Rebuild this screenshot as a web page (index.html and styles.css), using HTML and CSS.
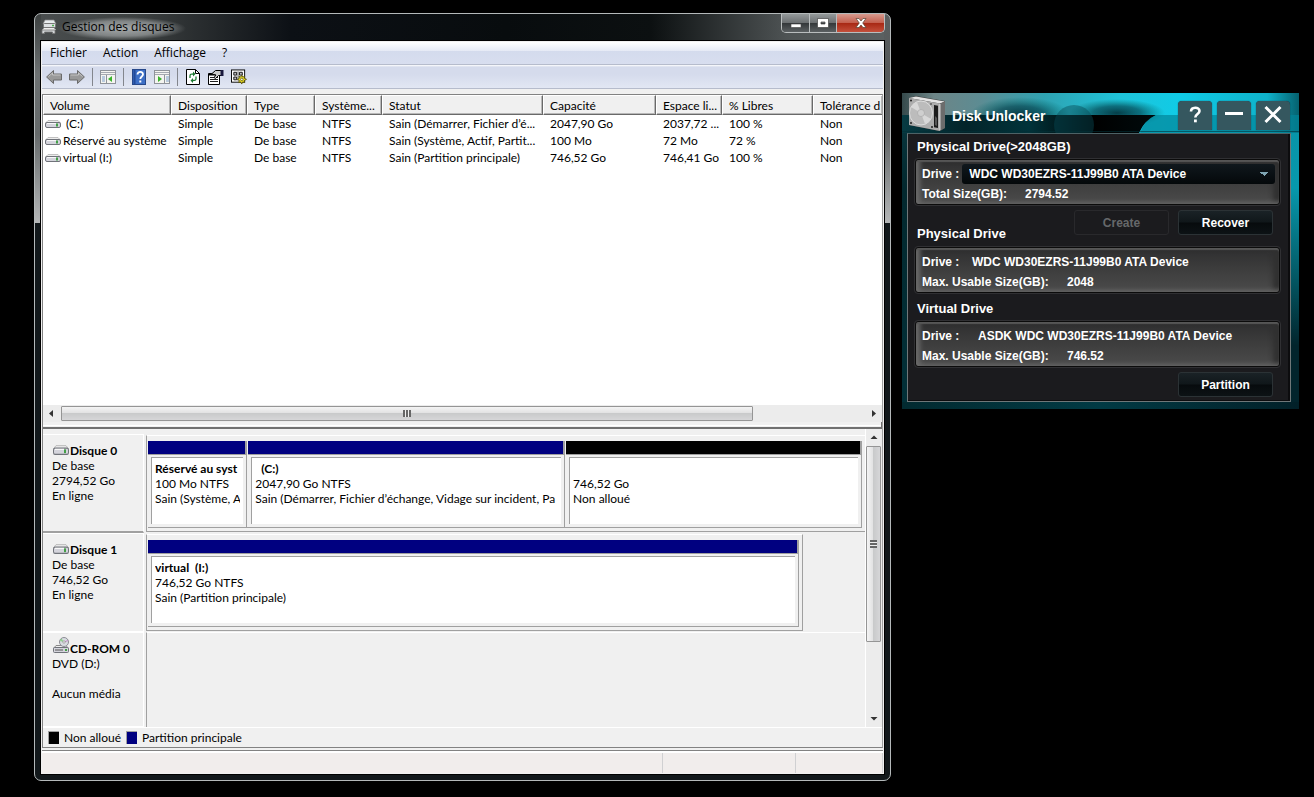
FILE: index.html
```html
<!DOCTYPE html>
<html lang="fr">
<head>
<meta charset="utf-8">
<title>Gestion des disques</title>
<link rel="stylesheet" href="styles.css">
</head>
<body>
<svg class="defs" width="0" height="0" aria-hidden="true">
  <defs>
    <symbol id="drive" viewBox="0 0 16 8">
      <path d="M3 .5h10l2.500 2.500h-15z" fill="#ececec" stroke="#b5b5b5" stroke-width=".8"/>
      <rect x=".5" y="2.500" width="15" height="5" rx="1.500" fill="#d4d4dc" stroke="#70737a"/>
      <path d="M2 3.500h9" stroke="#f8f8f8"/>
      <rect x="11" y="3.500" width="2" height="3" fill="#42a047"/>
    </symbol>
  </defs>
</svg>
<main class="desktop">
  <section class="win">
    <header class="titlebar">
      <svg class="app-icon" viewBox="0 0 16 16" width="16" height="16" aria-hidden="true">
        <path d="M4 1h9l2 4H2z" fill="#e8ecee" stroke="#888" stroke-width=".7"/>
        <rect x="2.500" y="4.500" width="12" height="4" rx="1" fill="#dde1e3" stroke="#777"/>
        <path d="M11 6.500h2" stroke="#4fae50" stroke-width="1.500"/>
        <path d="M3 9h10l2 2H1z" fill="#eee"/>
        <path d="M1 11h13v3.500h-2.500V13h-8v1.500H1z" fill="#d2d6d8" stroke="#777" stroke-width=".8"/>
      </svg>
      <h1 class="title">Gestion des disques</h1>
      <div class="caption-buttons">
        <button class="cap cap-min" aria-label="Réduire"><svg viewBox="0 0 12 12" width="12" height="12"><rect x="1" y="7" width="10" height="3.500" fill="#fff" stroke="#444" stroke-width=".6"/></svg></button>
        <button class="cap cap-max" aria-label="Agrandir"><svg viewBox="0 0 12 12" width="12" height="12"><path fill-rule="evenodd" d="M.5 1.500h11v9H.5zM4 5h4v2H4z" fill="#fff" stroke="#444" stroke-width=".7"/></svg></button>
        <button class="cap cap-close" aria-label="Fermer"><svg viewBox="0 0 12 12" width="12" height="12"><path d="M1 1.500h3l2 2.500 2-2.500h3L7.700 6l3.300 4.500H8L6 8l-2 2.500H1L4.300 6z" fill="#fff" stroke="#543" stroke-width=".7"/></svg></button>
      </div>
    </header>
    <div class="client">
      <nav class="menubar">
        <button class="menu">Fichier</button><button class="menu">Action</button><button class="menu">Affichage</button><button class="menu">?</button>
      </nav>
      <div class="toolbar">
        <button class="tool" aria-label="Précédent"><svg viewBox="0 0 16 16" width="16" height="16"><path d="M.6 8L7.500 1.500V5h8v6h-8v3.500z" fill="#999" stroke="#6b6b6b"/><path d="M2.500 7.500L6.500 4v2h8" fill="none" stroke="#c4c4c4"/></svg></button>
        <button class="tool" aria-label="Suivant"><svg viewBox="0 0 16 16" width="16" height="16"><path d="M15.400 8L8.500 1.500V5h-8v6h8v3.500z" fill="#999" stroke="#6b6b6b"/><path d="M1.500 6h8V4l4 3.500" fill="none" stroke="#c4c4c4"/></svg></button>
        <span class="sep"></span>
        <button class="tool" aria-label="Arborescence"><svg viewBox="0 0 16 14" width="16" height="14"><rect x=".5" y=".5" width="15" height="13" fill="#f4f4f0" stroke="#8e9299"/><path d="M1 2.500h14M1 4.500h14" stroke="#a5a9b0"/><path d="M6.500 5v8" stroke="#8e9299"/><path d="M2 7h3M2 9h3M2 11h3" stroke="#7da0cc"/><path d="M12 6v6L8 9z" fill="#3bb32d"/></svg></button>
        <span class="sep"></span>
        <button class="tool" aria-label="Aide"><svg viewBox="0 0 14 16" width="14" height="16"><rect x=".5" y=".5" width="13" height="15" fill="#3d6fc6" stroke="#27488a"/><path d="M2.500 1v14" stroke="#234a98" stroke-width="2"/><path d="M5.500 5.500c0-3.500 5.500-3.500 5.500 0 0 2-2.700 2-2.700 4.500" fill="none" stroke="#fff" stroke-width="1.800"/><rect x="7.300" y="11.500" width="2" height="2" fill="#fff"/></svg></button>
        <button class="tool" aria-label="Volet"><svg viewBox="0 0 16 14" width="16" height="14"><rect x=".5" y=".5" width="15" height="13" fill="#f4f4f0" stroke="#8e9299"/><path d="M1 2.500h14M1 4.500h14" stroke="#a5a9b0"/><path d="M10.500 5v8" stroke="#8e9299"/><path d="M12 7h3M12 9h3M12 11h3" stroke="#7da0cc"/><path d="M4 6v6l4-3z" fill="#3bb32d"/></svg></button>
        <span class="sep"></span>
        <button class="tool" aria-label="Actualiser"><svg viewBox="0 0 14 16" width="14" height="16"><path d="M.5.5h9l4 4v11H.5z" fill="#fff" stroke="#000"/><path d="M9.500.500v4h4" fill="none" stroke="#000"/><path d="M4 9V7c0-2 1-2 3.500-2M10 7.500v2c0 2-1 2-3.500 2" fill="none" stroke="#1d7a33" stroke-width="1.300"/><path d="M7 2.500v5L9.500 5zM7 9v5l-2.500-2.500z" fill="#1d7a33"/></svg></button>
        <button class="tool" aria-label="Propriétés"><svg viewBox="0 0 16 16" width="16" height="16"><path d="M.5 4.500h11v11H.5z" fill="#fff" stroke="#000"/><path d="M1 5.500h9" stroke="#000" stroke-width="2"/><path d="M2 8.500h8M2 10.500h8M2 12.500h8" stroke="#222"/><path d="M3.500 5l4-3.500h6v5h-3l-3 3-1.500-1L8 6z" fill="#ccc" stroke="#000"/><path d="M14 1v6" stroke="#18183c" stroke-width="3"/></svg></button>
        <button class="tool" aria-label="Paramètres"><svg viewBox="0 0 17 16" width="16" height="16"><rect x=".5" y=".5" width="14" height="13" fill="#fff" stroke="#000"/><path d="M3 3h3v3H3zM9 3h3v3H9zM3 8h3v3H3z" fill="#bbb" stroke="#111"/><path d="M7.500 2v10" stroke="#555"/><path d="M11.500 6l1 2 2-.8-.4 2 2.400 1.300-2.400 1.300.4 2-2.100-.6-1 2.300-1-2.300-2.200.7.600-2.300L6.700 10.500 9 9.300l-.6-2 2.100.7z" fill="#e9dc28" stroke="#4b4600" stroke-width=".8"/><circle cx="11.500" cy="10.500" r="1.300" fill="#fff" stroke="#4b4600" stroke-width=".7"/></svg></button>
      </div>
      <div class="panes">
        <div class="listview">
          <table class="volumes">
            <colgroup><col class="c1"><col class="c2"><col class="c3"><col class="c4"><col class="c5"><col class="c6"><col class="c7"><col class="c8"><col class="c9"></colgroup>
            <thead><tr><th>Volume</th><th>Disposition</th><th>Type</th><th>Système...</th><th>Statut</th><th>Capacité</th><th>Espace li...</th><th>% Libres</th><th>Tolérance d</th></tr></thead>
            <tbody>
              <tr><td><svg class="drv" width="16" height="8"><use href="#drive"/></svg>&nbsp;(C:)</td><td>Simple</td><td>De base</td><td>NTFS</td><td>Sain (Démarrer, Fichier d’é...</td><td>2047,90 Go</td><td>2037,72 ...</td><td>100 %</td><td>Non</td></tr>
              <tr><td><svg class="drv" width="16" height="8"><use href="#drive"/></svg>Réservé au système</td><td>Simple</td><td>De base</td><td>NTFS</td><td>Sain (Système, Actif, Partit...</td><td>100 Mo</td><td>72 Mo</td><td>72 %</td><td>Non</td></tr>
              <tr><td><svg class="drv" width="16" height="8"><use href="#drive"/></svg>virtual (I:)</td><td>Simple</td><td>De base</td><td>NTFS</td><td>Sain (Partition principale)</td><td>746,52 Go</td><td>746,41 Go</td><td>100 %</td><td>Non</td></tr>
            </tbody>
          </table>
          <div class="hscroll">
            <svg class="arrow" viewBox="0 0 16 16" width="16" height="16"><path d="M10 5v7L6 8.500z" fill="#333"/></svg>
            <div class="htrack"><div class="hthumb"><span class="grip"></span></div></div>
            <svg class="arrow" viewBox="0 0 16 16" width="16" height="16"><path d="M6 5v7l4-3.500z" fill="#333"/></svg>
          </div>
        </div>
        <div class="splitter"></div>
        <div class="diskpane">
          <div class="disks">
            <div class="disk">
              <div class="disk-label raised"><strong><svg class="ico" width="16" height="10" viewBox="0 0 16 8" preserveAspectRatio="none"><use href="#drive"/></svg>Disque 0</strong><span>De base</span><span>2794,52 Go</span><span>En ligne</span></div>
              <div class="strip full">
                <div class="part p-sys"><div class="bar"></div><div class="box"><b>Réservé au syst</b><span>100 Mo NTFS</span><span>Sain (Système, A</span></div></div>
                <div class="part p-c"><div class="bar"></div><div class="box"><b>&nbsp; (C:)</b><span>2047,90 Go NTFS</span><span>Sain (Démarrer, Fichier d’échange, Vidage sur incident, Pa</span></div></div>
                <div class="part p-free"><div class="bar free"></div><div class="box"><b>&nbsp;</b><span>746,52 Go</span><span>Non alloué</span></div></div>
              </div>
            </div>
            <div class="disk">
              <div class="disk-label"><strong><svg class="ico" width="16" height="10" viewBox="0 0 16 8" preserveAspectRatio="none"><use href="#drive"/></svg>Disque 1</strong><span>De base</span><span>746,52 Go</span><span>En ligne</span></div>
              <div class="strip partial">
                <div class="part p-all"><div class="bar"></div><div class="box"><b>virtual&nbsp; (I:)</b><span>746,52 Go NTFS</span><span>Sain (Partition principale)</span></div></div>
              </div>
            </div>
            <div class="disk cd">
              <div class="disk-label"><strong><svg class="ico" width="16" height="16" viewBox="0 0 16 16"><path d="M3 8.500h10l2.500 3h-15z" fill="#eee" stroke="#888"/><circle cx="11" cy="5" r="4.500" fill="#d9dde2" stroke="#8c8c94"/><path d="M11 5L8.500 1.500A4.500 4.500 0 0 0 7 4z" fill="#8fd08f"/><path d="M11 5l4-1.500" stroke="#c58bc8"/><circle cx="11" cy="5" r="1.200" fill="#fff" stroke="#777" stroke-width=".6"/><rect x=".5" y="10.500" width="15" height="5" rx="1" fill="#d4d4dc" stroke="#70737a"/><path d="M2 13h8" stroke="#555"/><rect x="12" y="12" width="2" height="2" fill="#42a047"/></svg>CD-ROM 0</strong><span>DVD (D:)</span><span>&nbsp;</span><span>Aucun média</span></div>
              <div class="empty"></div>
            </div>
          </div>
          <div class="vscroll">
            <svg class="arrow" viewBox="0 0 16 16" width="16" height="16"><path d="M4.500 10h7L8 6.500z" fill="#333"/></svg>
            <div class="vtrack"><div class="vthumb"><span class="vgrip"></span></div></div>
            <svg class="arrow" viewBox="0 0 16 16" width="16" height="16"><path d="M4.500 6h7L8 9.500z" fill="#333"/></svg>
          </div>
        </div>
        <div class="legend"><span class="key k-free"></span><span>Non alloué</span><span class="key k-prim"></span><span>Partition principale</span></div>
      </div>
      <footer class="status"><span class="s1"></span><span class="s2"></span><span class="s3"></span></footer>
    </div>
  </section>

  <section class="unlocker">
    <header class="u-title">
      <svg class="u-art" viewBox="0 0 397 40" preserveAspectRatio="none" aria-hidden="true">
        <defs>
          <linearGradient id="sky"><stop offset="0" stop-color="#35494b"/><stop offset=".08" stop-color="#6d8587"/><stop offset=".2" stop-color="#5c8c93"/><stop offset=".36" stop-color="#2fa3b2"/><stop offset=".55" stop-color="#1fc4da"/><stop offset=".7" stop-color="#10cbe6"/><stop offset=".92" stop-color="#0fb2ca"/><stop offset="1" stop-color="#05616f"/></linearGradient>
          <linearGradient id="low"><stop offset="0" stop-color="#063a42"/><stop offset=".25" stop-color="#03242a"/><stop offset=".5" stop-color="#01333a"/><stop offset=".75" stop-color="#000"/><stop offset="1" stop-color="#000a0c"/></linearGradient>
          <radialGradient id="cloud"><stop offset="0" stop-color="#022f38" stop-opacity=".9"/><stop offset=".5" stop-color="#03424d" stop-opacity=".65"/><stop offset="1" stop-color="#066" stop-opacity="0"/></radialGradient>
        </defs>
        <path d="M0 0h397v40H0z" fill="url(#sky)"/>
        <ellipse cx="118" cy="22" rx="50" ry="18" fill="url(#cloud)"/>
        <ellipse cx="215" cy="20" rx="48" ry="14" fill="url(#cloud)"/>
        <path d="M0 22h254q-12 6-17 18H0z" fill="url(#low)"/>
        <circle cx="172" cy="32" r="20" fill="#064a54" opacity=".45"/>
        <path d="M254 22h143v18H238q4-13 16-18z" fill="#028499" opacity=".7"/>
        <path d="M0 38.500h397" stroke="#033037" opacity=".6"/>
      </svg>
      <svg class="hdd" viewBox="0 0 38 36" width="38" height="36" aria-hidden="true">
        <path d="M1 2l7-2 29 5v27l-6 3L1 29z" fill="#3d3d3d"/>
        <path d="M1 2l7-1.500 29 5-5 2z" fill="#e4e4e4"/>
        <path d="M1 2l31 5.500V35L1 29z" fill="#adadad"/>
        <path d="M32 7.500l5-2V32l-5 3z" fill="#6c6c6c"/>
        <path d="M32 8v26" stroke="#eee" stroke-width=".8"/>
        <ellipse cx="13" cy="17" rx="11.500" ry="12" fill="#bcbcbc" stroke="#ededed" stroke-width=".7"/>
        <path d="M13 17L3 11a12 12 0 0 1 6-5zM13 17l10 6a12 12 0 0 1-6 5z" fill="#d8d8d8"/>
        <circle cx="13" cy="17" r="3.500" fill="#cfcfcf" stroke="#a5a5a5" stroke-width=".6"/>
        <path d="M26 9l4 .8V32l-4-.8z" fill="#1c1c1c"/><path d="M27 20l2 2v8l-2-1z" fill="#555"/>
        <g fill="#222"><circle cx="3" cy="4.500" r="1"/><circle cx="23" cy="8" r=".8"/><circle cx="3" cy="27" r="1"/><circle cx="24" cy="31" r="1"/></g>
      </svg>
      <h2 class="u-name">Disk Unlocker</h2>
      <button class="u-btn" aria-label="Help"><svg viewBox="0 0 20 20" width="20" height="20"><path d="M6 6.500c0-5 8.500-5 8.500-.5 0 3-4.200 3-4.200 6.500" fill="none" stroke="#fff" stroke-width="2.600"/><rect x="9" y="14.500" width="2.800" height="2.800" fill="#fff"/></svg></button>
      <button class="u-btn" aria-label="Minimize"><svg viewBox="0 0 20 20" width="20" height="20"><path d="M1 8.500h18" stroke="#fff" stroke-width="3"/></svg></button>
      <button class="u-btn" aria-label="Close"><svg viewBox="0 0 20 20" width="20" height="20"><path d="M2.500 2L17.500 17M17.500 2L2.500 17" stroke="#fff" stroke-width="3"/></svg></button>
    </header>
    <div class="u-body">
      <h3 class="u-head first">Physical Drive(&gt;2048GB)</h3>
      <div class="u-panel">
        <div class="u-line"><label for="drive-select">Drive :</label><select id="drive-select" class="u-select"><option>WDC WD30EZRS-11J99B0 ATA Device</option></select></div>
        <div class="u-line"><span class="k-total">Total Size(GB):</span><span>2794.52</span></div>
      </div>
      <div class="u-actions"><h3 class="u-head">Physical Drive</h3><button class="act" disabled>Create</button><button class="act">Recover</button></div>
      <div class="u-panel">
        <div class="u-line"><span class="k-drive">Drive :</span><span>WDC WD30EZRS-11J99B0 ATA Device</span></div>
        <div class="u-line"><span class="k-max">Max. Usable Size(GB):</span><span>2048</span></div>
      </div>
      <h3 class="u-head mid">Virtual Drive</h3>
      <div class="u-panel">
        <div class="u-line"><span class="k-vdrive">Drive :</span><span>ASDK WDC WD30EZRS-11J99B0 ATA Device</span></div>
        <div class="u-line"><span class="k-max">Max. Usable Size(GB):</span><span>746.52</span></div>
      </div>
      <div class="u-actions last"><button class="act">Partition</button></div>
    </div>
  </section>
</main>
</body>
</html>
```
FILE: styles.css
```css
* { box-sizing: border-box; }
body { margin: 0; background: #000; color: #000; font: 12px/15px "Open Sans", "Noto Sans", sans-serif; }
button { font: inherit; color: inherit; border: 0; padding: 0; background: none; }
h1, h2, h3 { margin: 0; }
svg { display: block; flex: none; }
.defs { position: absolute; }

.desktop {
  display: grid;
  grid-template-columns: minmax(0, 857fr) minmax(0, 397fr);
  gap: 11px;
  min-height: 100vh;
  padding: 13px 15px 16px 34px;
}

/* disk management window */
.win {
  display: flex;
  flex-direction: column;
  border: 1px solid #b4b9ba;
  border-radius: 7px;
  padding: 0 5px 5px;
  background:
    linear-gradient(#3c4040, #6d7172 60px, #666a6b 120px, #b5b7b8 209px, transparent 209px) left / 6px 100% no-repeat,
    linear-gradient(#5a5e5f, #55595a 60px, #606465 120px, #b5b7b8 209px, transparent 209px) right / 6px 100% no-repeat,
    linear-gradient(90deg, #4a4e4f, #3c4040 12%, #0c1015 30%, #080c0e 55%, #0c1011 72%, #4e5354 88%, #5c6162) top / 100% 28px no-repeat,
    #12181b;
}
.titlebar { display: flex; height: 26px; padding-left: 1px; }
.app-icon { margin-top: 5px; }
.title {
  margin: 3px 0 0 2px;
  padding: 1px 12px 3px 3px;
  font-size: 12px;
  line-height: 17px;
  font-weight: 400;
  background: radial-gradient(closest-side, rgba(170,174,175,.95), rgba(150,154,155,.75) 65%, transparent);
}
.caption-buttons {
  display: flex;
  height: 19px;
  margin-left: auto;
  border: 1px solid #b9bdbe;
  border-top: 0;
  border-radius: 0 0 5px 5px;
  overflow: hidden;
}
.cap { display: grid; place-items: center; width: 27px; background: linear-gradient(#94999a, #6c7072 48%, #34383a 52%, #5b6062); }
.cap + .cap { border-left: 1px solid #b9bdbe; }
.cap-close { width: 48px; background: linear-gradient(#d79a8e, #c4604f 48%, #a82814 52%, #c4503c); }

.client { flex: 1; display: flex; flex-direction: column; border: 1px solid #8d9394; background: #f0f0f0; outline: 1px solid #000; outline-offset: -1px; padding: 1px; }
.menubar { display: flex; height: 23px; background: linear-gradient(#fff, #e6eaf5 40%, #d4dbed 42%, #d8deef); border-bottom: 1px solid #b6bccc; }
.menu { padding: 0 8px 2px; }
.toolbar { display: flex; align-items: center; height: 24px; padding-left: 4px; gap: 7px; background: linear-gradient(#fff, #d5dbec 2px, #d5dbec 40%, #e2e7f3); border-bottom: 1px solid #b6bccc; }
.tool { display: grid; place-items: center; width: 16px; height: 16px; }
.sep { width: 1px; height: 18px; background: #83868d; }

.panes { flex: 1; display: flex; flex-direction: column; margin: 5px 0 2px; border: 1px solid #828282; border-right-color: #a0a0a0; font-family: Lato, "Open Sans", sans-serif; }
.listview { height: 327px; display: flex; flex-direction: column; background: #fff; overflow: hidden; }
.volumes { width: 100%; table-layout: fixed; border-collapse: separate; border-spacing: 0; }
.c1 { width: 128px; } .c2 { width: 76px; } .c3 { width: 68px; } .c4 { width: 67px; } .c5 { width: 161px; }
.c6 { width: 113px; } .c7 { width: 66px; } .c8 { width: 91px; } .c9 { width: 69px; }
.volumes th, .volumes td { padding: 0 0 0 6px; text-align: left; white-space: nowrap; overflow: hidden; font-weight: 400; }
.volumes th { height: 20px; background: #f0f0f0; border: 1px solid #fff; border-right-color: #696969; border-bottom: 1px solid #696969; box-shadow: inset -1px -1px #b8b8b8; }
.volumes th:last-child { border-right: 0; }
.volumes td { height: 17px; padding-left: 7px; }
.volumes td:first-child { padding-left: 2px; }
.drv { display: inline-block; margin-right: 2px; }
.hscroll { display: flex; height: 17px; margin-top: auto; background: #ececec; }
.htrack { flex: 1; padding: 1px 0 1px 2px; }
.hthumb { display: grid; place-items: center; width: 86%; height: 15px; border: 1px solid #959595; border-radius: 1px; background: linear-gradient(#f4f4f4, #e2e2e3 45%, #c9cacb 50%, #d6d6d8); }
.grip { width: 8px; height: 7px; background: repeating-linear-gradient(90deg, #666 0 2px, #eee 2px 3px); }
.splitter { height: 7px; background: #f0f0f0; border: solid #707070; border-width: 0 1px 2px 0; box-shadow: inset 0 3px #f0f0f0, inset 0 4px #fff; }

.diskpane { flex: 1; display: flex; min-height: 0; }
.disks { flex: 1; min-width: 0; padding-top: 5px; display: flex; flex-direction: column; }
.disk { display: flex; height: 99px; }
.disk.cd { flex: 1; height: auto; min-height: 90px; }
.disk-label { width: 101px; flex: none; display: flex; flex-direction: column; padding: 8px 0 0 9px; border: 1px solid #fff; border-left: 0; box-shadow: 1px 0 #f0f0f0; }
.disk-label.raised { border-bottom: 2px solid #a0a0a0; }
.disk-label strong { display: flex; align-items: flex-end; height: 15px; font-weight: 700; white-space: nowrap; }
.ico { margin: 0 1px 3px 1px; }
.strip { display: flex; margin: 1px 0 1px 2px; padding: 5px 3px 3px 1px; border: solid #a0a0a0; border-width: 0 0 1px 1px; border-top: 1px solid #fff; }
.strip.full { flex: 1; min-width: 0; }
.strip.partial { width: 657px; max-width: 91%; border-right-width: 1px; min-width: 0; }
.part { min-width: 0; display: flex; flex-direction: column; border: solid #a0a0a0; border-width: 0 1px 1px 0; }
.part + .part { padding-left: 1px; }
.p-sys { flex: 99; } .p-c { flex: 318; } .p-free { flex: 297; } .p-all { flex: 1; }
.bar { height: 14px; background: #000080; border-right: 1px solid #a0a0a0; border-bottom: 1px solid #a0a0a0; }
.bar.free { background: #000; }
.box { flex: 1; display: flex; flex-direction: column; margin: 2px 3px 3px; padding: 3px 3px 0; background: #fff; border: solid #a0a0a0; border-width: 1px 0 0 1px; white-space: nowrap; overflow: hidden; }
.box > * { overflow: hidden; flex: none; }
.empty { flex: 1; margin-left: 2px; border: solid #a0a0a0; border-width: 0 0 0 1px; border-top: 1px solid #fff; }
.vscroll { display: flex; flex-direction: column; width: 17px; background: #ececec; border-left: 1px solid #fff; }
.vtrack { flex: 1; padding: 1px 1px 0 0; }
.vthumb { display: grid; place-items: center; height: 74%; border: 1px solid #959595; border-radius: 1px; background: linear-gradient(90deg, #f4f4f4, #e2e2e3 45%, #c9cacb 50%, #d6d6d8); }
.vgrip { width: 7px; height: 8px; background: repeating-linear-gradient(#666 0 2px, #eee 2px 3px); }
.legend { display: flex; align-items: center; gap: 5px; height: 20px; padding-left: 5px; border-top: 1px solid #fff; }
.key { width: 11px; height: 13px; border: solid #a0a0a0; border-width: 1px 0 0 1px; }
.k-free { background: #000; }
.k-prim { background: #000080; }
.status { display: flex; height: 23px; border-top: 1px solid #828282; background: #f1edec; box-shadow: inset 0 2px #fff; }
.status span { border-right: 1px solid #d0d0d2; margin-top: 2px; }
.s1 { flex: 623; } .s2 { flex: 133; } .s3 { flex: 86; }

/* disk unlocker window */
.unlocker {
  align-self: start;
  margin-top: 80px;
  padding: 0 8px 7px 5px;
  color: #fff;
  font: bold 12px/20px "Liberation Sans", Arial, sans-serif;
  background:
    linear-gradient(90deg, #022a30, #013a44 50%, #022028) bottom / 100% 7px no-repeat,
    linear-gradient(#0892a6, #0798ac 30%, #035460 60%, #02242c 80%) right / 8px 100% no-repeat,
    linear-gradient(#0a3c44, #02282e 30%, #013038 100%) left / 5px 100% no-repeat,
    #023;
}
.u-title {
  position: relative;
  z-index: 0;
  display: flex;
  align-items: center;
  gap: 5px;
  height: 40px;
  margin: 0 -8px 0 -5px;
  padding: 0 9px 4px 6px;
}
.u-art { position: absolute; inset: 0; width: 100%; height: 100%; z-index: -1; }
.hdd { margin-top: 5px; }
.u-name { flex: 1; margin: 10px 0 0 1px; font-size: 14px; line-height: 18px; }
.u-btn { display: grid; place-items: center; width: 34px; height: 29px; margin-top: 8px; border-radius: 4px 4px 1px 1px; background: #35575f; box-shadow: 0 0 1px #123; }
.u-body { padding: 0 10px 4px 7px; background: #1b1b1e; border: 1px solid #6f7779; border-top-color: #4d6266; box-shadow: inset -2px -1px #0c0c0e; }
.u-head { font-size: 13px; line-height: 16px; padding-left: 2px; }
.first { padding-top: 5px; margin-bottom: 4px; }
.u-panel {
  height: 46px;
  padding: 4px 4px 4px 6px;
  border: 1px solid #0b0b0b;
  outline: 1px solid #303033;
  border-radius: 3px;
  background: linear-gradient(#2e2e2f, #3c3c3c 45%, #4b4b4b);
  box-shadow: inset 0 2px 1px #565656, inset 4px -2px 5px #6a6a6a, inset -6px 0 5px #303030;
}
.u-line { display: flex; align-items: center; height: 20px; white-space: nowrap; }
.u-select { flex: 1; min-width: 0; height: 20px; margin-left: 3px; padding: 0 7px; border: 0; border-radius: 3px; appearance: none; font: inherit; color: #fff; background: conic-gradient(from -45deg at 50% 100%, #7fa5b3 90deg, transparent 0) right 7px center / 8px 4px no-repeat, linear-gradient(#10181d, #04080a); }
.k-drive { width: 50px; } .k-vdrive { width: 56px; } .k-total { width: 103px; } .k-max { width: 145px; }
.u-actions { display: flex; gap: 9px; padding: 5px 7px 0 0; height: 42px; justify-content: flex-end; }
.u-actions .u-head { flex: 1; padding-top: 16px; }
.act { width: 95px; height: 25px; border: 1px solid #2b3235; border-radius: 3px; background: linear-gradient(#1a2226, #10171a 48%, #070b0d 52%, #0c1215); color: #fff; }
.act:disabled { background: #1b1b1e; color: #66686a; border-color: #29292c; }
.mid { padding-top: 8px; margin-bottom: 4px; }
.last { height: 30px; }
```
